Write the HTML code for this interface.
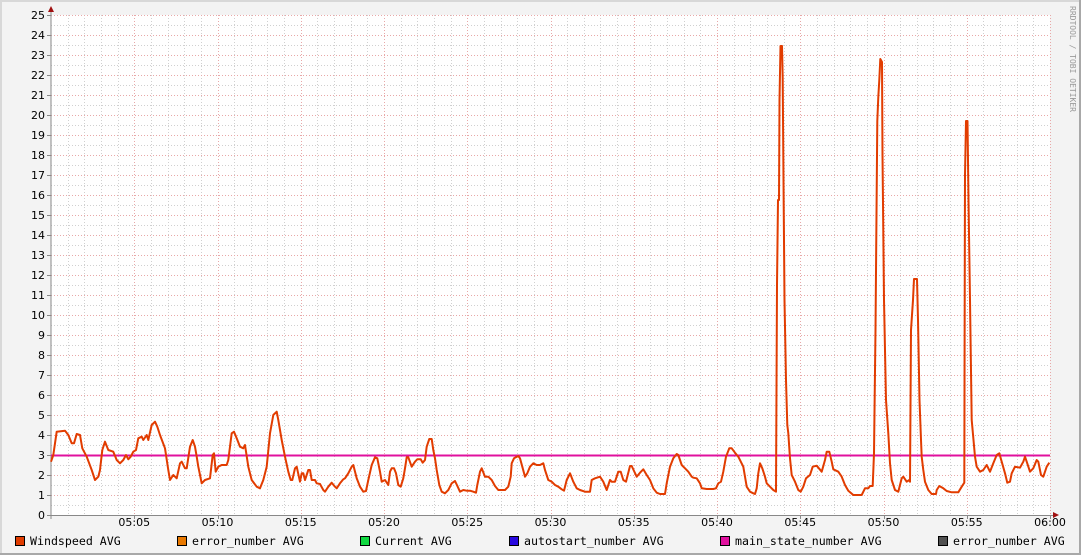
<!DOCTYPE html>
<html><head><meta charset="utf-8"><style>
html,body{margin:0;padding:0;background:#f3f3f3;}
svg{display:block;}
</style></head><body>
<svg id="s" width="1081" height="555" xmlns="http://www.w3.org/2000/svg" font-family="'DejaVu Sans Mono','Liberation Mono',monospace">
<rect x="0" y="0" width="1081" height="555" fill="#f3f3f3"/>
<rect x="0" y="0" width="1081" height="2" fill="#d8d8d8"/>
<rect x="0" y="0" width="2" height="555" fill="#d8d8d8"/>
<rect x="1079" y="0" width="2" height="555" fill="#a8a8a8"/>
<rect x="0" y="553" width="1081" height="2" fill="#a8a8a8"/>
<rect x="51" y="15" width="999" height="500" fill="#fff"/>
<g id="grid"></g>
<g id="labels" font-family="'DejaVu Sans','Liberation Sans',sans-serif" font-size="11" fill="#000"></g>
<line x1="51" y1="10" x2="51" y2="519" stroke="#888" stroke-width="1"/>
<line x1="47" y1="515.5" x2="1055" y2="515.5" stroke="#888" stroke-width="1"/>
<polygon points="48,12 54,12 51,6" fill="#a01010"/>
<polygon points="1053,512 1053,518 1059,515" fill="#a01010"/>
<line x1="51" y1="455.5" x2="1050" y2="455.5" stroke="#e0109e" stroke-width="2"/>
<polyline id="ws" fill="none" stroke="#e23c00" stroke-width="2" stroke-linejoin="round" points="51,461.7 53.3,455 56.7,431.7 65,430.7 68.3,435 71.7,443.3 74,443.3 76.7,434 80,435 82.3,448.3 86.7,456.7 91.7,470 95,480 98.3,476.7 100,470 102.3,450 105,441.7 108.3,450 113.3,451.7 116.7,460 120,463.3 123.3,460 126,455 128.3,459.3 130.7,456.7 133.3,451.7 136,450 138.3,438.3 141.7,436.7 143.3,440 146.7,435 148.3,440 151.7,425 155,421.7 157.3,426.7 160,435 165,448.3 168.3,470 170,480 173.3,475 176.7,478.3 180,463.3 181.7,461.7 185,468.3 186.7,468.3 190,446.7 192.7,440 195,446.7 196.7,456.7 198.3,466.7 201.7,483.3 205,480 210,478.3 212.7,455 214,453.3 215.7,471.7 218.3,466.7 221.7,465 226.7,465 228.3,460 231.7,433.3 234,431.7 236.7,438.3 240,446.7 243.3,448.3 245,445 248.3,466.7 251.7,480 256.7,486.7 260,488.3 263.3,480 266.7,466.7 270,433.3 273.3,415 276.7,411.7 278.3,420 281.7,440 285,456.7 288.3,471.7 290.7,480 292.3,480 295,468.3 296.7,466.7 300,481.7 301.7,473.3 303.3,473.3 305,480 308.3,470 310,470 311.7,480 315,480 316.7,483.3 320,484 323.3,490 325,491.7 328.3,486.7 331.7,482.7 335,486.7 336.7,488.3 340,483.3 343.3,479.3 345,478.3 348.3,473.3 351.7,466.7 353.3,465 356.7,478.3 360,486.7 363.3,491.7 366,491 368.3,480 371.7,465 375,457.3 377.3,458.3 380,471.7 381.7,481.7 385,480 388.3,485 390,471.7 391.7,468.3 394,468.3 396,473.3 398.3,485 400.7,486.7 403.3,478.3 405,468.3 406.7,457.3 408.3,457.3 411.7,466.7 415,461.7 417.3,459.3 420.7,459.3 422.7,462.7 425,460 426.7,446.7 429.3,439 431.7,439 433.3,450 435,458.3 436.7,470 439.3,485 441.7,491.7 445,493.3 448.3,490 451.7,483.3 455,481 457.7,486.7 460,491.7 463.3,490 466.7,490.7 470,490.7 473.3,491.7 476,492.7 477.3,485 480,471.7 481.7,468.3 485,476.7 488.3,476.7 491.7,480 495,486 498.3,490 505,490 508.3,486.7 510.7,476.7 511.7,463.3 514,458.3 518.3,456 520,458.3 522.3,466.7 525,476.7 527.3,473.3 530,466.7 533.3,463.3 536.7,465 540,465 543.3,463.3 545,470 548.3,480 551.7,481.7 555,485 558.3,486.7 561.7,489.3 564,490.7 566.7,480 570,473.3 573.3,481.7 576.7,488.3 580,490 585,491.7 590,491.7 591.7,480 595,478.3 600,476.7 603.3,481.7 606.7,490 610,480 611.7,481.7 615,481.7 618.3,471.7 620.7,471.7 623.3,480 626,481.7 630,466 631.7,466 636.7,476.7 640,472.7 643.3,469.3 646.7,475 650,480 653.3,488.3 656.7,492.7 660,494 665,494 666.7,483.3 670,466.7 673.3,458.3 676.7,454 678.3,455 681.7,465 685,468.3 688.3,471.7 691.7,476.7 693.3,477.7 696.7,478.3 700,483.3 701.7,488.3 706.7,489 713.3,489 716,488.3 718.3,483.3 721,481.7 723.3,471.7 726,456.7 729.3,448.3 731.7,448.3 735,452.7 738.3,456.7 743.3,466.7 745,476.7 746.7,486.7 750,491.7 753.3,493.3 755,494 756.7,488.3 758.3,473.3 760,463.3 762.3,468.3 765,476.7 766.7,483.3 770,486.7 773.3,490 776,491.7 777,285 778,200 779,200 779.5,100 780.5,46 782,46 782.7,78 783.5,180 784.5,300 786,380 787.3,425 788.3,433.3 790,458.3 791.7,475 795,481.7 798.3,490 800.7,491.7 803.3,486.7 806,478.3 810,475 812.7,466.7 816.7,465.7 821.7,471.7 825,460 826.7,451.7 829.3,451.7 831.7,461.7 833.3,469.3 838.3,471.7 841.7,476.7 845,485 848.3,490.7 853.3,495 861.7,495 865,488.3 868.3,488.3 870,486 872.7,486 874,453.3 875.5,330 877.3,121 878.3,97 879.3,80 880.3,59 882,62 882.5,155 884,300 886,400 888.3,433.3 890,463.3 891.7,480 895,490 898.3,491.7 901.7,478.3 903.3,476.7 906.7,481.7 909.3,480 910,481.7 911,330 913,300 914,279 917,279 918,320 919.5,400 921,440 921.7,456.7 923.3,470 925,481.7 928.3,490 931.7,494 936,494 936.7,490 939.3,486 943.3,488.3 946.7,491 951.7,492.3 958.3,492.3 961.7,486.7 964.3,482.7 965,175 966,121 967.5,121 968.5,200 970,300 971.7,420 975,456.7 976.7,466.7 980,471.7 983.3,470 986.7,465 990,471.7 993.3,463.3 996.7,455 999.3,453.3 1001.7,461.7 1005,473.3 1007.3,482.7 1010,481.7 1011.7,473.3 1015,466.7 1020,467.7 1023.3,461.7 1025,456.7 1026.7,461.7 1030,471.7 1033.3,468.3 1036.7,460 1038.3,461.7 1041,475 1043.3,476.7 1046.7,466.7 1049.3,462.7"/>
<text transform="translate(1070,6) rotate(90)" font-size="8" fill="#999">RRDTOOL / TOBI OETIKER</text>
<g font-size="11.6" fill="#000">
<rect x="15.5" y="536.5" width="9" height="9" fill="#e03c00" stroke="#000"/>
<text x="30" y="545">Windspeed AVG</text>
<rect x="177.5" y="536.5" width="9" height="9" fill="#e87800" stroke="#000"/>
<text x="192" y="545">error_number AVG</text>
<rect x="360.5" y="536.5" width="9" height="9" fill="#10d840" stroke="#000"/>
<text x="375" y="545">Current AVG</text>
<rect x="509.5" y="536.5" width="9" height="9" fill="#2808e0" stroke="#000"/>
<text x="524" y="545">autostart_number AVG</text>
<rect x="720.5" y="536.5" width="9" height="9" fill="#e0109e" stroke="#000"/>
<text x="735" y="545">main_state_number AVG</text>
<rect x="938.5" y="536.5" width="9" height="9" fill="#505050" stroke="#000"/>
<text x="953" y="545">error_number AVG</text>
</g>
</svg>
<script>
var ns="http://www.w3.org/2000/svg",g=document.getElementById("grid"),lb=document.getElementById("labels");
function ln(x1,y1,x2,y2,c){var l=document.createElementNS(ns,"line");l.setAttribute("x1",x1);l.setAttribute("y1",y1);l.setAttribute("x2",x2);l.setAttribute("y2",y2);l.setAttribute("stroke",c);l.setAttribute("stroke-width","1");l.setAttribute("stroke-dasharray","1,2");g.appendChild(l);}
function tx(x,y,s,a){var t=document.createElementNS(ns,"text");t.setAttribute("x",x);t.setAttribute("y",y);t.setAttribute("text-anchor",a);t.textContent=s;lb.appendChild(t);}
for(var i=1;i<=50;i++){var y=515.5-i*10;if(i%2)ln(51,y,1050,y,"#d0d0d0");}
for(var m=1;m<=60;m++){var x=Math.round(51+m*999/60)+0.5;if(m%5)ln(x,15,x,515,"#d0d0d0");}
for(var i=1;i<=25;i++){var y=515.5-i*20;ln(51,y,1050,y,"#e8a8a8");}
for(var m=5;m<=60;m+=5){var x=Math.round(51+m*999/60)+0.5;ln(x,15,x,515,"#e8a8a8");}
for(var i=0;i<=25;i++){var y=515-i*20;tx(45,y+4,""+i,"end");var l=document.createElementNS(ns,"line");l.setAttribute("x1",47);l.setAttribute("x2",51);l.setAttribute("y1",y+0.5);l.setAttribute("y2",y+0.5);l.setAttribute("stroke","#888");g.appendChild(l);}
var lbl=["05:05","05:10","05:15","05:20","05:25","05:30","05:35","05:40","05:45","05:50","05:55","06:00"];
for(var k=0;k<12;k++){var x=51+(k+1)*5*999/60;tx(x,526,lbl[k],"middle");var l=document.createElementNS(ns,"line");l.setAttribute("x1",Math.round(x)+0.5);l.setAttribute("x2",Math.round(x)+0.5);l.setAttribute("y1",515);l.setAttribute("y2",519);l.setAttribute("stroke","#888");g.appendChild(l);}
</script>
</body></html>
